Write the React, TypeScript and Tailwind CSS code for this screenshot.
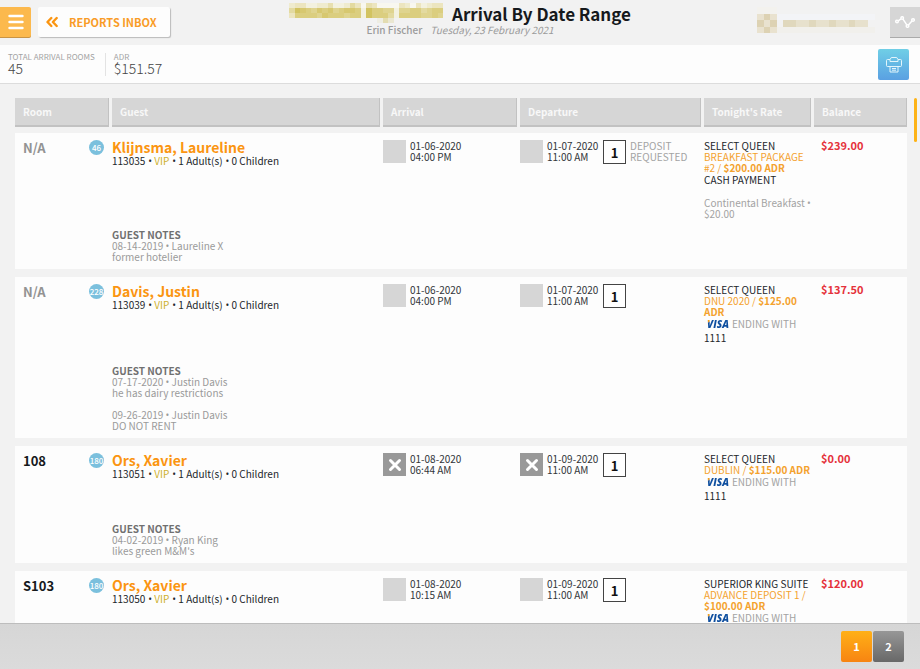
import { useState } from 'react';

type Arrival = {
  room: string;
  badge: number;
  name: string;
  conf: string;
  arrival: [string, string];
  departure: [string, string];
  checked: boolean;
  alert?: string;
  roomType: string;
  rate: string;
  adr: string;
  card?: string;
  addon?: { name: string; price: string };
  balance: string;
  notes: { date: string; author: string; body: string }[];
};

const arrivals: Arrival[] = [
  {
    room: 'N/A', badge: 46, name: 'Klijnsma, Laureline', conf: '113035',
    arrival: ['01-06-2020', '04:00 PM'], departure: ['01-07-2020', '11:00 AM'], checked: false,
    alert: 'DEPOSIT REQUESTED',
    roomType: 'SELECT QUEEN', rate: 'BREAKFAST PACKAGE #2', adr: '$200.00 ADR',
    addon: { name: 'Continental Breakfast', price: '$20.00' }, balance: '$239.00',
    notes: [{ date: '08-14-2019', author: 'Laureline X', body: 'former hotelier' }],
  },
  {
    room: 'N/A', badge: 228, name: 'Davis, Justin', conf: '113039',
    arrival: ['01-06-2020', '04:00 PM'], departure: ['01-07-2020', '11:00 AM'], checked: false,
    roomType: 'SELECT QUEEN', rate: 'DNU 2020', adr: '$125.00 ADR', card: '1111', balance: '$137.50',
    notes: [
      { date: '07-17-2020', author: 'Justin Davis', body: 'he has dairy restrictions' },
      { date: '09-26-2019', author: 'Justin Davis', body: 'DO NOT RENT' },
    ],
  },
  {
    room: '108', badge: 180, name: 'Ors, Xavier', conf: '113051',
    arrival: ['01-08-2020', '06:44 AM'], departure: ['01-09-2020', '11:00 AM'], checked: true,
    roomType: 'SELECT QUEEN', rate: 'DUBLIN', adr: '$115.00 ADR', card: '1111', balance: '$0.00',
    notes: [{ date: '04-02-2019', author: 'Ryan King', body: "likes green M&M's" }],
  },
  {
    room: 'S103', badge: 180, name: 'Ors, Xavier', conf: '113050',
    arrival: ['01-08-2020', '10:15 AM'], departure: ['01-09-2020', '11:00 AM'], checked: false,
    roomType: 'SUPERIOR KING SUITE', rate: 'ADVANCE DEPOSIT 1', adr: '$100.00 ADR', card: '1111', balance: '$120.00',
    notes: [],
  },
];

const columns = ['Room', 'Guest', 'Arrival', 'Departure', "Tonight's Rate", 'Balance'];

// each digit is the strength of one block
const hotelBlocks = [
  '2331122411253043000032031233',
  '5987687867887197766166775677',
  '3777768777677197775177776676',
  '0000000000000000142000000000',
];

function HotelMosaic() {
  return (
    <svg className="h-5 w-[154px]" viewBox="0 0 28 4" preserveAspectRatio="none" shapeRendering="crispEdges" aria-hidden="true">
      <rect width="28" height="3" fill="#f8f7ef" />
      {hotelBlocks.map((row, y) =>
        row.split('').map((n, x) => (
          <rect key={`${x}-${y}`} x={x} y={y} width="1" height="1" fill="#c6b130" opacity={Number(n) / 12} />
        )),
      )}
    </svg>
  );
}

function UserMosaic() {
  return (
    <svg className="h-[26px] w-[118px]" viewBox="0 0 18 4" preserveAspectRatio="none" shapeRendering="crispEdges" aria-hidden="true">
      <rect x="0" y="0" width="3" height="1" fill="#f3f2ee" />
      <rect x="0" y="1" width="3" height="3" fill="#e9e2cf" />
      <path d="M1 1h1v1H1zM0 2h1v1H0zM2 2h1v1H2zM1 3h1v1H1z" fill="#ddd2b3" />
      <rect x="3" y="1" width="15" height="1" fill="#f3f4f7" />
      <rect x="4" y="2" width="13" height="1" fill="#e7e1cd" />
      <path d="M4 2h2v1H4zM8 2h1v1H8zM11 2h1v1h-1zM14 2h1v1h-1z" fill="#e0d8bd" />
      <rect x="3" y="3" width="15" height="1" fill="#f1f0ec" />
    </svg>
  );
}

// zero line height so the second font does not stretch the line
function Dot() {
  return <span className="font-['Open_Sans',sans-serif] leading-0">•</span>;
}

function StayBox({ label, checked }: { label: string; checked: boolean }) {
  return (
    <label className="relative block size-[23px] shrink-0">
      <input
        type="checkbox"
        defaultChecked={checked}
        aria-label={label}
        className="peer block size-[23px] appearance-none bg-[#d6d6d6] checked:bg-[#999]"
      />
      <svg viewBox="0 0 23 23" className="pointer-events-none absolute inset-0 hidden peer-checked:block" stroke="#fff" strokeWidth="3" strokeLinecap="round" aria-hidden="true">
        <path d="M7.5 7.5l9 9M16.5 7.5l-9 9" />
      </svg>
    </label>
  );
}

function StayDate({ value }: { value: [string, string] }) {
  return (
    <div className="w-[52px] shrink-0 whitespace-nowrap text-[#32363a]">
      <div>{value[0]}</div>
      <div>{value[1]}</div>
    </div>
  );
}

function ArrivalRows({ item }: { item: Arrival }) {
  const cell = 'bg-[#fdfdfd] pt-[7px] align-top';
  const notesCell = 'border-b-8 border-transparent bg-[#fdfdfd] bg-clip-padding pb-[7px]';
  return (
    <tbody>
      <tr>
        <td className={cell}>
          <div className="flex items-center justify-between px-2">
            <span className={item.room === 'N/A' ? 'text-[13px] leading-[14px] font-bold text-[#939393]' : 'text-[13px] leading-[14px] font-bold text-[#16191c]'}>
              {item.room}
            </span>
            <span className="flex size-[15px] items-center justify-center rounded-full bg-[#7bc0dd] text-[8px] font-medium text-white">{item.badge}</span>
          </div>
        </td>
        <td className={cell}>
          <a href="#guest" className="block text-[14px] leading-[15px] font-bold text-[#fb9511]">{item.name}</a>
          <div className="flex gap-[3px] text-[#22262a]">
            <span>{item.conf}</span>
            <span><Dot /> <span className="text-[#cdb02c]">VIP</span></span>
            <span><Dot /> 1 Adult(s)</span>
            <span><Dot /> 0 Children</span>
          </div>
        </td>
        <td className={cell}>
          <div className="flex gap-1">
            <StayBox label={`${item.name} arrived`} checked={item.checked} />
            <StayDate value={item.arrival} />
          </div>
        </td>
        <td className={cell}>
          <div className="flex gap-1">
            <StayBox label={`${item.name} departed`} checked={item.checked} />
            <StayDate value={item.departure} />
            <div className="flex h-6 w-[23px] shrink-0 items-center justify-center border border-[#444] bg-white text-[13px] font-bold text-[#111]">1</div>
            {item.alert && <div className="w-14 text-[#a3a3a3]">{item.alert}</div>}
          </div>
        </td>
        <td className={cell}>
          <div className="text-[#22262a]">{item.roomType}</div>
          <div className="text-[#f4a22e]">
            {item.rate} / <span className="font-bold">{item.adr}</span>
          </div>
          {item.card ? (
            <div className="leading-[14px] text-[#22262a]">
              <div className="flex gap-[3px] pl-[3px] whitespace-nowrap text-[#a3a3a3]">
                <span className="bg-linear-to-br from-[#f0a020] from-20% to-[#0f4f9f] to-25% bg-clip-text font-['Open_Sans',sans-serif] font-extrabold text-transparent italic">VISA</span>
                ENDING WITH
              </div>
              <div>{item.card}</div>
            </div>
          ) : (
            <div className="leading-[14px] text-[#22262a]">CASH PAYMENT</div>
          )}
          <div className="py-[10px] text-[#a3a3a3]">
            {item.addon && (
              <>
                <div className="whitespace-nowrap">{item.addon.name} <Dot /></div>
                <div>{item.addon.price}</div>
              </>
            )}
          </div>
        </td>
        <td className={cell}>
          <div className="pl-[7px] text-[11px] font-bold text-[#e5323b]">{item.balance}</div>
        </td>
      </tr>
      <tr>
        <td className={notesCell} />
        <td className={notesCell}>
          <div className="font-bold text-[#707070]">GUEST NOTES</div>
          <div className="flex flex-col gap-[11px] text-[#9a9a9a]">
            {item.notes.map((note) => (
              <div key={note.date}>
                <div>{note.date} <Dot /> {note.author}</div>
                <div>{note.body}</div>
              </div>
            ))}
          </div>
        </td>
        <td colSpan={4} className={notesCell} />
      </tr>
    </tbody>
  );
}

export default function App() {
  const [page, setPage] = useState(1);

  return (
    <div className="flex h-screen flex-col bg-[#f2f2f2] font-['Noto_Sans_CJK_SC','Source_Sans_Pro',sans-serif] text-[10px] leading-[11px]">
      <header className="grid h-[45px] shrink-0 grid-cols-[1fr_auto_1fr]">
        <div className="flex gap-[7px] pt-[7px]">
          <button aria-label="Menu" className="flex h-[30px] w-[31px] items-center justify-center rounded-r-xs bg-[#fcb94d] shadow-[0_1px_0_#c99445]">
            <svg viewBox="0 0 16 18" className="h-[18px] w-4" stroke="#fff" strokeWidth="2.6" strokeLinecap="round" aria-hidden="true">
              <path d="M1.6 3h12.8M1.6 9h12.8M1.6 15h12.8" />
            </svg>
          </button>
          <a href="#reports" className="flex h-[30px] w-[132px] items-center gap-[11px] rounded-xs bg-[#fdfdfd] pl-2 text-[11px] font-bold text-[#f99c27] shadow-[1px_1px_1px_#bbb]">
            <svg viewBox="0 0 12 12" className="size-3" fill="none" stroke="#fb9511" strokeWidth="2.4" strokeLinecap="round" strokeLinejoin="round" aria-hidden="true">
              <path d="M5.3 2L1.5 6l3.8 4M10.7 2L6.9 6l3.8 4" />
            </svg>
            REPORTS INBOX
          </a>
        </div>
        <div className="pt-[3px] text-center">
          <div className="flex gap-[9px]">
            <HotelMosaic />
            <h1 className="text-[17px] leading-[21px] font-bold whitespace-nowrap text-[#16191c]">Arrival By Date Range</h1>
          </div>
          <div className="flex justify-center gap-2 text-[#9b9b9b]">
            <span className="font-medium">Erin Fischer</span>
            <span className="italic">Tuesday, 23 February 2021</span>
          </div>
        </div>
        <div className="flex justify-end gap-[15px] pt-[7px]">
          <UserMosaic />
          <button aria-label="Activity" className="flex h-[30px] w-[30px] items-center justify-center bg-[#d6d6d6] shadow-[0_1px_0_#aaa]">
            <svg viewBox="0 0 20 12" className="h-3 w-5" fill="none" stroke="#fff" strokeWidth="1.5" aria-hidden="true">
              <circle cx="2" cy="5.5" r="1.3" />
              <circle cx="7.2" cy="2" r="1.3" />
              <circle cx="12.5" cy="10" r="1.3" />
              <circle cx="18" cy="4" r="1.3" />
              <path d="M3.2 4.8L6 2.8M8 3.2l3.8 5.6M13.4 9L17 5" />
            </svg>
          </button>
        </div>
      </header>

      <section className="flex h-[39px] shrink-0 items-start border-b border-[#dcdcdc] bg-[#fdfdfd] pt-2 pl-2">
        <dl className="border-r border-[#e3e3e3] pr-[10px]">
          <dt className="text-[8px] leading-[8px] text-[#a3a3a3]">TOTAL ARRIVAL ROOMS</dt>
          <dd className="text-[14px] leading-[15px] font-light text-[#444]">45</dd>
        </dl>
        <dl className="pl-2">
          <dt className="text-[8px] leading-[8px] text-[#a3a3a3]">ADR</dt>
          <dd className="text-[14px] leading-[15px] font-light text-[#444]">$151.57</dd>
        </dl>
        <button aria-label="Print" className="mt-[-4px] mr-[11px] ml-auto flex size-[31px] items-center justify-center rounded-xs bg-linear-to-b from-[#70cfe6] to-[#5aa0e2]">
          <svg viewBox="0 0 16 16" className="size-4" fill="none" stroke="#e3f5fb" strokeWidth="1" strokeLinejoin="round" aria-hidden="true">
            <path d="M4 9.5H1.5a1 1 0 0 1-1-1v-5a1 1 0 0 1 1-1H4M12 2.5h2.5a1 1 0 0 1 1 1v5a1 1 0 0 1-1 1H12" />
            <path d="M4 4.5h8v-2L10.700.5H5.300L4 2.500zM3 9.500h10M4 9.500v5.500h8V9.500M6 11.500h4M6 13.200h4" />
          </svg>
        </button>
      </section>

      <main className="flex min-h-0 flex-1 gap-[7px] overflow-hidden pt-[14px] pr-[3px] pl-[15px]">
        <div className="min-w-0 flex-1">
          <table className="w-full table-fixed border-separate border-spacing-0">
            <colgroup>
              <col className="w-[97px]" />
              <col />
              <col className="w-[137px]" />
              <col className="w-[184px]" />
              <col className="w-[110px]" />
              <col className="w-[93px]" />
            </colgroup>
            <thead>
              <tr>
                {columns.map((name) => (
                  <th key={name} scope="col" className="group p-0 pb-[6px] text-left">
                    <div className="mr-[3px] h-[29px] border-r border-b-2 border-[#c2c2c2] bg-[#d6d6d6] pl-2 leading-[27px] font-bold whitespace-nowrap text-[#f8f8f8] group-last:mr-0">
                      {name}
                    </div>
                  </th>
                ))}
              </tr>
            </thead>
            {arrivals.map((item) => (
              <ArrivalRows key={item.conf} item={item} />
            ))}
          </table>
        </div>
        <div className="h-11 w-[3px] shrink-0 rounded-full bg-[#fdb317]" />
      </main>

      <footer className="flex h-[46px] shrink-0 items-start justify-end border-t border-[#bdbdbd] bg-linear-to-b from-[#d6d6d6] to-[#dbdbdb] pt-[7px] pr-4">
        <nav aria-label="Pages" className="flex gap-px">
          {[1, 2].map((n) => (
            <button
              key={n}
              onClick={() => setPage(n)}
              aria-current={page === n ? 'page' : undefined}
              className={
                page === n
                  ? 'size-[31px] rounded-xs bg-linear-to-b from-[#ffb016] to-[#f78412] text-[11px] font-bold text-white'
                  : 'size-[31px] rounded-xs bg-linear-to-b from-[#979797] to-[#686868] text-[11px] font-bold text-white'
              }
            >
              {n}
            </button>
          ))}
        </nav>
      </footer>
    </div>
  );
}
